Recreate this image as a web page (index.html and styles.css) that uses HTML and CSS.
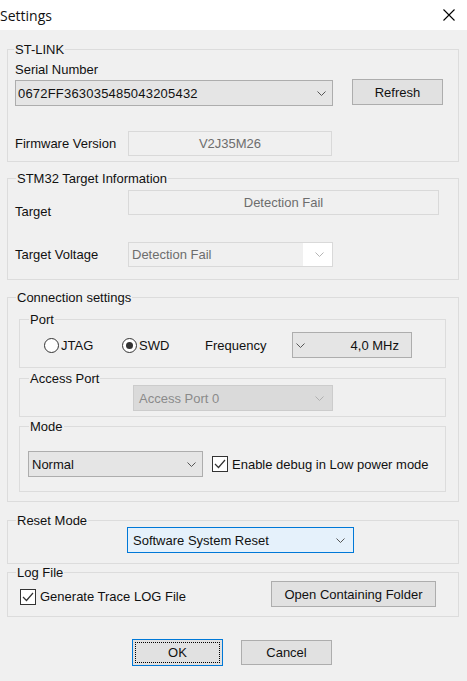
FILE: index.html
```html
<!DOCTYPE html>
<html lang="en">
<head>
    <meta charset="UTF-8">
    <meta name="viewport" content="width=device-width, initial-scale=1.0">
    <title>Settings</title>
    <link rel="stylesheet" href="styles.css">
</head>
<body>
    <div class="titlebar">
        <span class="title">Settings</span>
        <svg class="close" width="12" height="12" viewBox="0 0 12 12">
            <path d="M0.5 0.5 L11.5 11.5 M11.5 0.5 L0.5 11.5" stroke="#000" stroke-width="1.1" fill="none"/>
        </svg>
    </div>

    <div class="dialog">
        <!-- ST-LINK probe -->
        <div class="group stlink">
            <span class="legend">ST-LINK</span>
            <div class="serial-label">Serial Number</div>
            <div class="serial-row">
                <div class="combo serial-combo">
                    <span class="serial-value">0672FF363035485043205432</span>
                    <svg class="chevron" width="9" height="5" viewBox="0 0 9 5"><polyline points="0.5,0.5 4.5,4.5 8.5,0.5" fill="none" stroke="#555"/></svg>
                </div>
                <button type="button" class="btn refresh-btn">Refresh</button>
            </div>
            <div class="fw-row">
                <span class="field-label">Firmware Version</span>
                <div class="readonly fw-box">V2J35M26</div>
            </div>
        </div>

        <!-- target info -->
        <div class="group target">
            <span class="legend">STM32 Target Information</span>
            <div class="target-row">
                <span class="field-label target-label">Target</span>
                <div class="readonly target-box">Detection Fail</div>
            </div>
            <div class="voltage-row">
                <span class="field-label">Target Voltage</span>
                <div class="combo voltage-combo">
                    <span class="voltage-value">Detection Fail</span>
                    <svg class="chevron" width="9" height="5" viewBox="0 0 9 5"><polyline points="0.5,0.5 4.5,4.5 8.5,0.5" fill="none" stroke="#b5b5b5"/></svg>
                </div>
            </div>
        </div>

        <!-- connection -->
        <div class="group connection">
            <span class="legend">Connection settings</span>

            <div class="subgroup port">
                <span class="legend">Port</span>
                <div class="port-row">
                    <label class="option jtag"><span class="radio"></span>JTAG</label>
                    <label class="option swd"><span class="radio checked"></span>SWD</label>
                    <span class="freq-label">Frequency</span>
                    <div class="combo freq-combo">
                        <svg class="chevron" width="9" height="5" viewBox="0 0 9 5"><polyline points="0.5,0.5 4.5,4.5 8.5,0.5" fill="none" stroke="#555"/></svg>
                        <span>4,0 MHz</span>
                    </div>
                </div>
            </div>

            <div class="subgroup access">
                <span class="legend">Access Port</span>
                <div class="combo access-combo">
                    <span>Access Port 0</span>
                    <svg class="chevron" width="9" height="5" viewBox="0 0 9 5"><polyline points="0.5,0.5 4.5,4.5 8.5,0.5" fill="none" stroke="#b0b0b0"/></svg>
                </div>
            </div>

            <div class="subgroup mode">
                <span class="legend">Mode</span>
                <div class="mode-row">
                    <div class="combo mode-combo">
                        <span>Normal</span>
                        <svg class="chevron" width="9" height="5" viewBox="0 0 9 5"><polyline points="0.5,0.5 4.5,4.5 8.5,0.5" fill="none" stroke="#555"/></svg>
                    </div>
                    <label class="option lowpower">
                        <svg class="check" width="16" height="16" viewBox="0 0 16 16"><rect x="0.5" y="0.5" width="15" height="15" fill="#fff" stroke="#333"/><polyline points="3,8 6.5,11.5 13,4" fill="none" stroke="#333" stroke-width="1.2"/></svg>
                        Enable debug in Low power mode
                    </label>
                </div>
            </div>
        </div>

        <!-- reset -->
        <div class="group reset">
            <span class="legend">Reset Mode</span>
            <div class="combo reset-combo">
                <span>Software System Reset</span>
                <svg class="chevron" width="9" height="5" viewBox="0 0 9 5"><polyline points="0.5,0.5 4.5,4.5 8.5,0.5" fill="none" stroke="#555"/></svg>
            </div>
        </div>

        <!-- log -->
        <div class="group log">
            <span class="legend">Log File</span>
            <div class="log-row">
                <label class="option trace">
                    <svg class="check" width="16" height="16" viewBox="0 0 16 16"><rect x="0.5" y="0.5" width="15" height="15" fill="#fff" stroke="#333"/><polyline points="3,8 6.5,11.5 13,4" fill="none" stroke="#333" stroke-width="1.2"/></svg>
                    Generate Trace LOG File
                </label>
                <button type="button" class="btn folder-btn">Open Containing Folder</button>
            </div>
        </div>

        <div class="actions">
            <button type="button" class="btn ok-btn"><span class="focus">OK</span></button>
            <button type="button" class="btn cancel-btn">Cancel</button>
        </div>
    </div>
</body>
</html>
```

FILE: styles.css
```css
* {
    box-sizing: border-box;
}
body {
    margin: 0;
    width: 467px;
    height: 681px;
    overflow: hidden;
    background: #f0f0f0;
    font-family: "Liberation Sans", Arial, sans-serif;
    font-size: 13px;
    color: #111;
}
.titlebar {
    height: 30px;
    background: #fff;
    display: flex;
    align-items: center;
    justify-content: space-between;
}
.title {
    font-family: "Open Sans", sans-serif;
    font-size: 14px;
    margin-left: 0;
}
.close {
    margin-right: 12px;
}
.dialog {
    padding: 19px 8px 0 7px;
}

/* group boxes */
.group, .subgroup {
    position: relative;
    border: 1px solid #dcdcdc;
}
.legend {
    position: absolute;
    top: -8px;
    left: 8px;
    line-height: 15px;
    padding: 0 1px;
    background: #f0f0f0;
    white-space: nowrap;
}
.stlink .legend {
    left: 6px;
}
.subgroup > .legend {
    left: 9px;
}

/* shared controls */
.combo {
    display: flex;
    align-items: center;
    justify-content: space-between;
    height: 26px;
    padding: 0 6px 0 3px;
    border: 1px solid #adadad;
    background: #e5e5e5;
    white-space: nowrap;
}
.chevron {
    flex: none;
}
.btn {
    height: 26px;
    padding: 0;
    border: 1px solid #adadad;
    background: #e1e1e1;
    font-family: "Liberation Sans", Arial, sans-serif;
    font-size: 13px;
    color: #111;
}
.readonly {
    height: 25px;
    line-height: 23px;
    text-align: center;
    border: 1px solid #d9d9d9;
    background: #f0f0f0;
    color: #6d6d6d;
}
.field-label {
    flex: none;
    width: 113px;
}
.option {
    display: flex;
    align-items: center;
    white-space: nowrap;
}
.radio {
    width: 15px;
    height: 15px;
    margin-right: 2px;
    border: 1px solid #333;
    border-radius: 50%;
    background: #fff;
    display: flex;
    align-items: center;
    justify-content: center;
}
.radio.checked::after {
    content: "";
    width: 7px;
    height: 7px;
    border-radius: 50%;
    background: #333;
}
.check {
    flex: none;
    margin-right: 4px;
}

/* ST-LINK */
.stlink {
    height: 113px;
    padding: 12px 0 0 7px;
}
.serial-label {
    line-height: 15px;
}
.serial-row {
    display: flex;
    align-items: flex-start;
    margin-top: 2px;
}
.serial-combo {
    width: 318px;
    margin-top: 1px;
    padding-left: 2px;
}
.serial-value {
    letter-spacing: 0.2px;
}
.refresh-btn {
    width: 91px;
    margin-left: 19px;
}
.fw-row {
    display: flex;
    align-items: center;
    margin-top: 25px;
}
.fw-box {
    width: 204px;
}

/* target */
.target {
    height: 102px;
    margin-top: 16px;
    padding: 11px 0 0 7px;
}
.target-row {
    display: flex;
    align-items: flex-start;
}
.target-label {
    margin-top: 14px;
    line-height: 15px;
}
.target-box {
    width: 311px;
}
.voltage-row {
    display: flex;
    align-items: center;
    margin-top: 23px;
}
.voltage-combo {
    width: 205px;
    height: 25px;
    padding: 0 8px 0 0;
    border-color: #d9d9d9;
    background: #fff;
    color: #6d6d6d;
}
.voltage-value {
    flex: 1;
    align-self: stretch;
    line-height: 23px;
    padding-left: 3px;
    margin-right: 12px;
    background: #f0f0f0;
}

/* connection */
.connection {
    height: 205px;
    margin-top: 17px;
    padding: 21px 12px 0 11px;
}
.port {
    height: 49px;
    padding: 12px 0 0 24px;
}
.port-row {
    display: flex;
    align-items: center;
    height: 26px;
}
.jtag {
    width: 78px;
}
.swd {
    width: 83px;
}
.freq-label {
    width: 87px;
}
.freq-combo {
    width: 120px;
    padding: 0 12px 0 3px;
}
.access {
    height: 39px;
    margin-top: 10px;
    padding: 6px 0 0 113px;
}
.access-combo {
    width: 200px;
    padding: 0 8px 0 5px;
    border-color: #cccccc;
    background: #dadada;
    color: #8a8a8a;
}
.mode {
    height: 66px;
    margin-top: 9px;
    padding: 24px 0 0 8px;
}
.mode-row {
    display: flex;
    align-items: center;
}
.mode-combo {
    width: 175px;
}
.lowpower {
    margin-left: 9px;
}

/* reset mode */
.reset {
    height: 44px;
    margin-top: 18px;
    padding: 6px 0 0 119px;
}
.reset-combo {
    width: 227px;
    padding: 0 8px 0 5px;
    border-color: #0078d7;
    background: #e5f1fb;
}

/* log file */
.log {
    height: 45px;
    margin-top: 8px;
    padding: 8px 22px 0 12px;
}
.log-row {
    display: flex;
    align-items: center;
}
.trace {
    margin-top: 5px;
}
.folder-btn {
    width: 165px;
    margin-left: auto;
}

/* dialog buttons */
.actions {
    display: flex;
    align-items: flex-start;
    margin-top: 22px;
    padding-left: 125px;
}
.ok-btn {
    width: 91px;
    height: 27px;
    padding: 2px;
    border-color: #0078d7;
}
.ok-btn .focus {
    display: flex;
    align-items: center;
    justify-content: center;
    height: 100%;
    border: 1px dotted #000;
}
.cancel-btn {
    width: 91px;
    height: 25px;
    margin-top: 1px;
    margin-left: 18px;
}
```
